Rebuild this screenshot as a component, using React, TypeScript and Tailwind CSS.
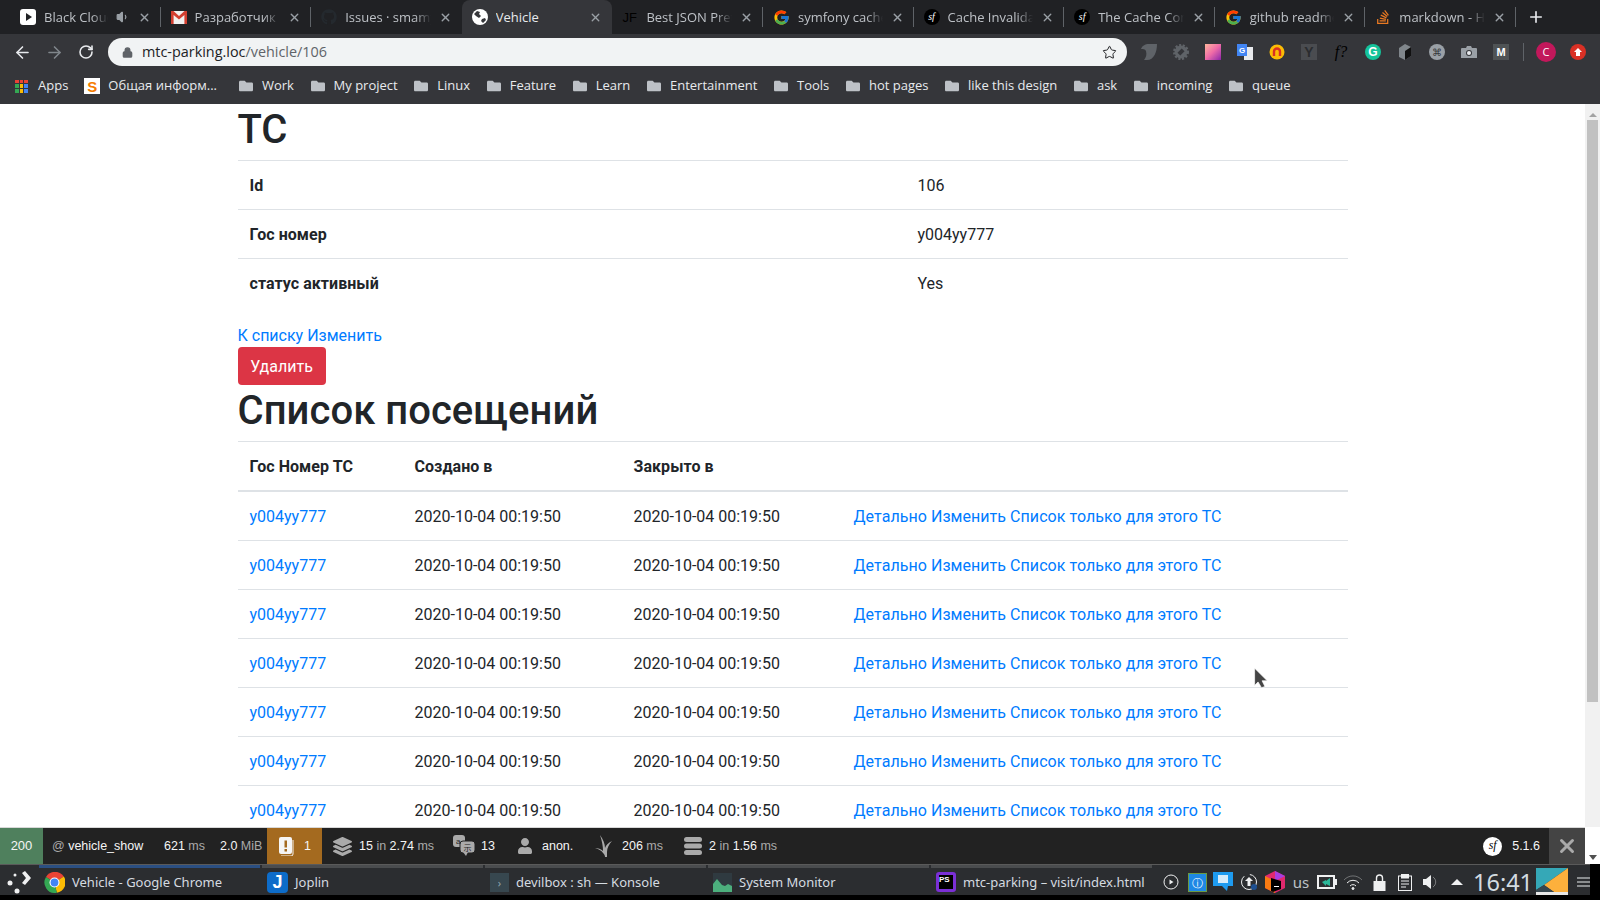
import { ArrowLeft, ArrowRight, Lock, Plus, RotateCw, Star, X, Volume1 } from "lucide-react";
import { FcGoogle } from "react-icons/fc";
import { FaGithub, FaLayerGroup, FaUser, FaStackOverflow, FaFolder } from "react-icons/fa";
import type { ReactNode } from "react";

const chromeFont = "font-['Open_Sans',sans-serif]";
const linkClass = "text-[#007bff]";

function SfBadge({ size = 16, dark = true }: { size?: number; dark?: boolean }) {
  return (
    <span
      style={{ width: size, height: size, fontSize: size * 0.62 }}
      className={`flex shrink-0 items-center justify-center rounded-full font-['Liberation_Serif',serif] italic leading-none ${dark ? "bg-black text-white" : "bg-white text-black"}`}
    >
      sf
    </span>
  );
}

function BlackCloudIcon() {
  return (
    <svg width="16" height="16" viewBox="0 0 16 16" className="shrink-0">
      <rect width="16" height="16" rx="3" fill="#fff" />
      <path d="M6 4l6 4-6 4z" fill="#202124" />
    </svg>
  );
}

function GmailIcon() {
  return (
    <svg width="16" height="13" viewBox="0 0 16 13" className="shrink-0">
      <rect width="16" height="13" fill="#f1f1f1" />
      <path d="M0 0h2.5L8 5 13.5 0H16v13h-2.6V4L8 8.6 2.6 4v9H0z" fill="#d23f31" />
    </svg>
  );
}

function GlobeIcon() {
  return (
    <svg width="16" height="16" viewBox="0 0 16 16" className="shrink-0">
      <circle cx="8" cy="8" r="8" fill="#fff" />
      <path d="M2 5l3-3 3 1-1 2 2 2-2 2-3-2zM10 10l3-1 1 2-3 3-2-2z" fill="#35363a" />
    </svg>
  );
}

const tabs: { title: string; icon: ReactNode; audio?: boolean; active?: boolean }[] = [
  { title: "Black Cloud", icon: <BlackCloudIcon />, audio: true },
  { title: "Разработчик Разработчик", icon: <GmailIcon /> },
  { title: "Issues · smamy/repo", icon: <FaGithub className="shrink-0 text-[#24292e]" size={16} /> },
  { title: "Vehicle", icon: <GlobeIcon />, active: true },
  {
    title: "Best JSON Pretty",
    icon: <span className="w-4 shrink-0 font-['Liberation_Sans',sans-serif] text-[13px] leading-none text-black">JF</span>,
  },
  { title: "symfony cache", icon: <FcGoogle className="shrink-0" size={17} /> },
  { title: "Cache Invalidation", icon: <SfBadge /> },
  { title: "The Cache Component", icon: <SfBadge /> },
  { title: "github readme", icon: <FcGoogle className="shrink-0" size={17} /> },
  { title: "markdown - How", icon: <FaStackOverflow className="shrink-0 text-[#e87922]" size={16} /> },
];

function Tab({ title, icon, audio, active }: { title: string; icon: ReactNode; audio?: boolean; active?: boolean }) {
  return (
    <div
      className={`flex h-[34px] w-[150.6px] shrink-0 items-center gap-2 px-[10px] ${active ? "rounded-t-lg bg-[#35363a] text-[#e8eaed]" : "text-[#bdc1c6]"}`}
    >
      {icon}
      <span
        className={`min-w-0 flex-1 overflow-hidden whitespace-nowrap pt-[2px] text-[13px] ${active ? "" : "[mask-image:linear-gradient(to_left,transparent,black_16px)]"}`}
      >
        {title}
      </span>
      {audio && <Volume1 size={14} className="shrink-0 text-[#9aa0a6]" fill="#9aa0a6" />}
      <X size={13} strokeWidth={2.5} className="shrink-0 text-[#9aa0a6]" />
    </div>
  );
}

function TabSep({ hidden }: { hidden?: boolean }) {
  return <span className={`-ml-px h-[20px] w-px shrink-0 ${hidden ? "bg-transparent" : "bg-[#5f6368]"}`} />;
}

function TabStrip() {
  return (
    <div className="flex h-[34px] items-center bg-[#202124] pl-[10px]">
      {tabs.map((t, i) => (
        <div key={i} className="flex items-center">
          <Tab {...t} />
          <TabSep hidden={t.active || tabs[i + 1]?.active} />
        </div>
      ))}
      <Plus size={18} strokeWidth={2.2} className="ml-[11px] text-[#e8eaed]" />
    </div>
  );
}

const ext: ReactNode[] = [
  <svg key="a" width="16" height="16" viewBox="0 0 16 16"><path d="M0 5c1-3 4-5 8-5h8c0 8-3 16-10 16H3c2-3 3-5 2-9-1-2-3-2-5-2z" fill="#5f6368" /></svg>,
  <svg key="b" width="16" height="16" viewBox="0 0 16 16"><circle cx="8" cy="8" r="6.5" fill="#5f6368" stroke="#5f6368" strokeWidth="3" strokeDasharray="2 1.5" /><rect x="6" y="5" width="4" height="6" fill="#35363a" transform="rotate(45 8 8)" /></svg>,
  <span key="c" className="h-4 w-4 bg-gradient-to-br from-[#ffb59a] via-[#ee6aa7] to-[#8e1fa8]" />,
  <svg key="d" width="16" height="16" viewBox="0 0 16 16"><rect x="7" y="3" width="9" height="13" fill="#e8eaed" /><rect width="10" height="12" fill="#4285f4" /><text x="2" y="9" fontSize="8" fontWeight="700" fill="#fff" fontFamily="Liberation Sans">G</text></svg>,
  <svg key="e" width="16" height="16" viewBox="0 0 16 16"><circle cx="8" cy="8" r="7.5" fill="#fbbc05" /><path d="M5 12V7.5a3 3 0 016 0V12" stroke="#d93025" strokeWidth="2.4" fill="none" /></svg>,
  <span key="f" className="flex h-4 w-4 items-center justify-center bg-[#4a4c50] font-['Liberation_Sans',sans-serif] text-[14px] font-bold leading-none text-[#2b2c2f]">Y</span>,
  <span key="g" className="font-['Liberation_Serif',serif] text-[16px] italic leading-none text-black">f?</span>,
  <span key="h" className="flex h-4 w-4 items-center justify-center rounded-full bg-[#15c39a] font-['Liberation_Sans',sans-serif] text-[12px] font-bold leading-none text-white">G</span>,
  <svg key="i" width="16" height="16" viewBox="0 0 16 16"><path d="M2 4l6-4 6 3v9l-6 4-6-3z" fill="#80868b" /><path d="M8 7l6-4v9l-6 4z" fill="#111" /></svg>,
  <span key="j" className="flex h-4 w-4 items-center justify-center rounded-full bg-[#9aa0a6] text-[10px] leading-none text-[#35363a]">⌘</span>,
  <svg key="k" width="16" height="14" viewBox="0 0 16 14"><path d="M1 3h4l1-2h4l1 2h4a1 1 0 011 1v9H0V4a1 1 0 011-1z" fill="#9aa0a6" /><circle cx="8" cy="8" r="3" fill="#35363a" /><circle cx="8" cy="8" r="2" fill="#e8eaed" /></svg>,
  <span key="l" className="flex h-4 w-4 items-center justify-center bg-[#4f5355] font-['Liberation_Sans',sans-serif] text-[11px] font-black leading-none text-white">M</span>,
];

function Toolbar() {
  return (
    <div className="flex h-[36px] items-center bg-[#35363a]">
      <div className="flex w-[108px] shrink-0 items-center pl-[6px] text-[#e8eaed]">
        <span className="flex w-8 justify-center"><ArrowLeft size={19} strokeWidth={2} /></span>
        <span className="flex w-8 justify-center"><ArrowRight size={19} strokeWidth={2} className="text-[#80868b]" /></span>
        <span className="flex w-8 justify-center"><RotateCw size={16} strokeWidth={2.4} /></span>
      </div>
      <div className="flex h-[28px] w-[1019px] shrink-0 items-center rounded-full bg-[#f1f3f4] pl-[14px] pr-[10px]">
        <Lock size={11} strokeWidth={3} className="text-[#5f6368]" fill="#5f6368" />
        <span className="ml-[9px] flex-1 pb-px text-[14.4px] text-[#202124]">
          mtc-parking.loc<span className="text-[#5f6368]">/vehicle/106</span>
        </span>
        <Star size={15} strokeWidth={1.6} className="text-[#202124]" />
      </div>
      <div className="ml-[6px] flex items-center">
        {ext.map((e, i) => (
          <span key={i} className="flex h-7 w-8 items-center justify-center">{e}</span>
        ))}
        <span className="mx-[6px] h-[18px] w-px bg-[#5f6368]" />
        <span className="ml-[6px] flex h-[20px] w-[20px] items-center justify-center rounded-full bg-[#c2185b] text-[11px] text-white">C</span>
        <span className="ml-[14px] flex h-4 w-4 items-center justify-center rounded-full bg-[#d93025]">
          <svg width="10" height="10" viewBox="0 0 10 10"><path d="M5 1l4 4H7v4H3V5H1z" fill="#fff" /></svg>
        </span>
      </div>
    </div>
  );
}

const bookmarks = ["Work", "My project", "Linux", "Feature", "Learn", "Entertainment", "Tools", "hot pages", "like this design", "ask", "incoming", "queue"];

function BookmarksBar() {
  return (
    <div className="flex h-[34px] items-start bg-[#35363a] pt-[6px] text-[13px] text-[#e8eaed]">
      <div className="ml-[15px] flex h-[20px] items-center">
        <span className="grid h-[13px] w-[13px] grid-cols-3 gap-px">
          {["#ea4335", "#ea4335", "#ea4335", "#34a853", "#fbbc05", "#4285f4", "#34a853", "#fbbc05", "#4285f4"].map((c, i) => (
            <span key={i} style={{ background: c }} />
          ))}
        </span>
        <span className="ml-[10px]">Apps</span>
        <span className="ml-[16px] flex h-4 w-4 items-center justify-center bg-white font-['Liberation_Sans',sans-serif] text-[15px] font-bold leading-none text-[#f57c00]">S</span>
        <span className="ml-[8px]">Общая информ...</span>
      </div>
      <div className="ml-[22px] flex h-[20px] items-center gap-[16.6px]">
        {bookmarks.map((b) => (
          <span key={b} className="flex items-center gap-[9px]">
            <FaFolder size={14} className="text-[#bdc1c6]" />
            {b}
          </span>
        ))}
      </div>
    </div>
  );
}

function DetailRow({ label, value }: { label: string; value: string }) {
  return (
    <tr className="border-t border-[#dee2e6]">
      <th className="w-[668px] px-3 pb-[11px] pt-[13px] text-left font-bold tracking-[0.05px]">{label}</th>
      <td className="px-3 pb-[11px] pt-[13px]">{value}</td>
    </tr>
  );
}

function VisitRow() {
  return (
    <tr className="border-t border-[#dee2e6]">
      <td className="px-3 pb-[11px] pt-[13px]"><a className={linkClass}>у004уу777</a></td>
      <td className="px-3 pb-[11px] pt-[13px]">2020-10-04 00:19:50</td>
      <td className="px-3 pb-[11px] pt-[13px]">2020-10-04 00:19:50</td>
      <td className={`px-3 pb-[11px] pt-[13px] tracking-[0.05px] ${linkClass}`}>
        <a>Детально</a> <a>Изменить</a> <a>Список только для этого ТС</a>
      </td>
    </tr>
  );
}

function Page() {
  return (
    <div className="relative min-h-0 flex-1 overflow-hidden bg-white font-['Roboto',sans-serif] text-[16px] leading-6 text-[#212529]">
      <div className="ml-[237.5px] w-[1110px]">
        <h1 className="mb-2 h-12 pt-[2px] text-[40px] font-medium leading-[48px]">ТС</h1>
        <table className="mb-4 w-full table-fixed">
          <tbody>
            <DetailRow label="Id" value="106" />
            <DetailRow label="Гос номер" value="у004уу777" />
            <DetailRow label="статус активный" value="Yes" />
          </tbody>
        </table>
        <div className={`h-6 pt-px ${linkClass}`}>
          <a>К списку</a> <a>Изменить</a>
        </div>
        <button className="block h-[38px] w-[88px] rounded bg-[#dc3545] pt-px text-white">Удалить</button>
        <h1 className="mb-2 h-12 pt-[2px] text-[40px] font-medium leading-[48px] tracking-[0.05px]">Список посещений</h1>
        <table className="w-full table-fixed">
          <thead>
            <tr className="border-t border-b-2 border-[#dee2e6] text-left tracking-[0.05px]">
              <th className="w-[165px] px-3 pb-[11px] pt-[13px] font-bold">Гос Номер ТС</th>
              <th className="w-[219px] px-3 pb-[11px] pt-[13px] font-bold">Создано в</th>
              <th className="w-[220px] px-3 pb-[11px] pt-[13px] font-bold">Закрыто в</th>
              <th className="p-3" />
            </tr>
          </thead>
          <tbody>
            {[0, 1, 2, 3, 4, 5, 6, 7].map((i) => (
              <VisitRow key={i} />
            ))}
          </tbody>
        </table>
      </div>
      <svg width="17" height="23" viewBox="0 0 14 20" className="absolute left-[1253px] top-[563px]">
        <path d="M1 1v15l3-3 3 5 3-1-2.500-5H12z" fill="#454545" stroke="#fff" strokeWidth="0.6" />
      </svg>
    </div>
  );
}

function Muted({ children }: { children: ReactNode }) {
  return <span className="text-[#aaa]">{children}</span>;
}

function TranslationIcon() {
  return (
    <svg width="22" height="22" viewBox="0 0 22 22" fill="#aaa" className="shrink-0">
      <rect x="0" y="0" width="12" height="12" rx="3" />
      <rect x="7" y="6" width="15" height="12" rx="3" stroke="#222" />
      <path d="M10 17h5l-2 4z" />
      <text x="3" y="9" fontSize="8" fill="#222" fontFamily="Liberation Sans">a</text>
      <text x="10.500" y="16" fontSize="8" fill="#222" fontFamily="Noto Sans CJK JP">示</text>
    </svg>
  );
}

function TwigIcon() {
  return (
    <svg width="20" height="23" viewBox="0 0 20 23" fill="#aaa" className="shrink-0">
      <path d="M10 22c0-2-1-3-2-4C7 16 4 14 0 13c3 0 6 1 8 3 0-5-1-10-3-16 3 4 5 9 5 13 1-3 3-5 7-7-3 3-5 7-5 11v5z" />
    </svg>
  );
}

function DbIcon() {
  return (
    <svg width="18" height="18" viewBox="0 0 18 18" fill="#aaa" className="shrink-0">
      <rect width="18" height="5" rx="2.500" />
      <rect y="6.500" width="18" height="5" rx="2.500" />
      <rect y="13" width="18" height="5" rx="2.500" />
    </svg>
  );
}

function DebugBar() {
  return (
    <div className="flex h-[37px] shrink-0 items-stretch border-t border-[#d8d8d8] bg-[#222] font-['Liberation_Sans',sans-serif] text-[12.5px] text-[#f5f5f5]">
      <div className="flex w-[43px] items-center justify-center bg-[#4f805d] text-[13px]">200</div>
      <div className="ml-[9px] flex w-[112px] items-center"><Muted>@&nbsp;</Muted>vehicle_show</div>
      <div className="flex w-[56px] items-center">621&nbsp;<Muted>ms</Muted></div>
      <div className="flex w-[47px] items-center">2.0&nbsp;<Muted>MiB</Muted></div>
      <div className="flex w-[55px] items-center bg-[#a46a1f] pl-[12px]">
        <svg width="15" height="19" viewBox="0 0 15 19" className="shrink-0">
          <rect x="0" y="0" width="13" height="17" rx="2" fill="#f5f5f5" />
          <path d="M14 3v14a2 2 0 01-2 2H2" stroke="#f5f5f5" fill="none" />
          <rect x="5.500" y="3.500" width="2.500" height="7" fill="#a46a1f" />
          <rect x="5.500" y="12" width="2.500" height="2.500" fill="#a46a1f" />
        </svg>
        <span className="ml-[10px]">1</span>
      </div>
      <div className="ml-[11px] flex w-[120px] items-center gap-[7px]">
        <FaLayerGroup size={19} className="shrink-0 text-[#aaa]" />
        <span>15 <Muted>in</Muted> 2.74 <Muted>ms</Muted></span>
      </div>
      <div className="flex w-[64px] items-center gap-[6px]">
        <TranslationIcon />
        <span>13</span>
      </div>
      <div className="flex w-[80px] items-center gap-[9px]">
        <FaUser size={16} className="shrink-0 text-[#aaa]" />
        <span>anon.</span>
      </div>
      <div className="-ml-[2px] flex w-[89px] items-center gap-[7px]">
        <TwigIcon />
        <span>206 <Muted>ms</Muted></span>
      </div>
      <div className="flex items-center gap-[7px]">
        <DbIcon />
        <span>2 <Muted>in</Muted> 1.56 <Muted>ms</Muted></span>
      </div>
      <div className="ml-auto flex items-center gap-[10px] pr-[9px]">
        <SfBadge size={19} dark={false} />
        <span>5.1.6</span>
      </div>
      <div className="flex w-[36px] items-center justify-center bg-[#444]">
        <X size={22} strokeWidth={3.2} className="text-[#aaa]" />
      </div>
    </div>
  );
}

function Scrollbar() {
  return (
    <div className="flex h-full w-[15px] shrink-0 flex-col">
      <div className="flex h-[723px] flex-col items-center bg-[#f1f1f1]">
        <span className="mt-[9px] h-0 w-0 border-x-[4px] border-b-[4px] border-x-transparent border-b-[#a3a3a3]" />
        <span className="mt-[3px] h-[582px] w-[11px] bg-[#c1c1c1]" />
      </div>
      <div className="flex flex-1 justify-center bg-white pt-[28px]">
        <span className="h-0 w-0 border-x-[4px] border-t-[5px] border-x-transparent border-t-[#505050]" />
      </div>
    </div>
  );
}

const tasks: { label: string; active?: boolean; icon: ReactNode }[] = [
  {
    label: "Vehicle - Google Chrome",
    active: true,
    icon: (
      <svg width="21" height="21" viewBox="0 0 21 21" className="shrink-0">
        <path d="M10.500 10.500L2 5a10.500 10.500 0 0117.800-.500z" fill="#ea4335" />
        <path d="M10.500 10.500L19.800 4.500a10.500 10.500 0 01-7 16.300z" fill="#fbbc05" />
        <path d="M10.500 10.500l2.300 10.300A10.500 10.500 0 012 5z" fill="#34a853" />
        <circle cx="10.500" cy="10.500" r="5" fill="#fff" />
        <circle cx="10.500" cy="10.500" r="3.900" fill="#4285f4" />
      </svg>
    ),
  },
  {
    label: "Joplin",
    icon: <span className="flex h-[21px] w-[21px] shrink-0 items-center justify-center rounded-sm bg-[#0d6cc9] font-['Liberation_Sans',sans-serif] text-[18px] font-bold leading-none text-white">J</span>,
  },
  {
    label: "devilbox : sh — Konsole",
    icon: <span className="flex h-[19px] w-[19px] shrink-0 items-center justify-center bg-[#37474f] text-[11px] leading-none text-[#90a4ae]">›</span>,
  },
  {
    label: "System Monitor",
    icon: (
      <svg width="19" height="19" viewBox="0 0 19 19" className="shrink-0">
        <rect width="19" height="19" fill="#2f3a40" />
        <path d="M0 11l4-5 5 6 3 1 3-2 4 2v6H0z" fill="#4caf7d" />
      </svg>
    ),
  },
  {
    label: "mtc-parking – visit/index.html",
    icon: (
      <span className="flex h-[20px] w-[20px] shrink-0 items-start justify-center rounded-[3px] bg-[#7b2fd6] p-[3px]">
        <span className="h-full w-full bg-black font-['Liberation_Sans',sans-serif] text-[8px] font-bold leading-[10px] text-white">PS</span>
      </span>
    ),
  },
];

const trayIcons: ReactNode[] = [
  <svg key="play" width="16" height="16" viewBox="0 0 16 16">
    <circle cx="8" cy="8" r="7" fill="none" stroke="#eff0f1" />
    <path d="M6.500 5.500l4 2.500-4 2.500z" fill="#eff0f1" />
  </svg>,
  <span key="info" className="flex h-[19px] w-[19px] items-center justify-center border border-[#6b9a44] bg-[#1e88e5] text-[11px] leading-none text-white">ⓘ</span>,
  <svg key="chat" width="20" height="20" viewBox="0 0 20 20">
    <path d="M0 0h20v14h-5l-1 5-5-5H0z" fill="#1e9bf0" />
    <rect x="5" y="3" width="10" height="8" fill="#d6ecfb" />
  </svg>,
  <svg key="update" width="18" height="18" viewBox="0 0 18 18">
    <circle cx="9" cy="9" r="7.500" fill="none" stroke="#eff0f1" strokeDasharray="30 6" />
    <path d="M9 4l4 4h-2.500v5h-3V8H5z" fill="#eff0f1" />
    <circle cx="14" cy="14" r="3" fill="#1d4f91" />
  </svg>,
  <svg key="toolbox" width="20" height="22" viewBox="0 0 20 22">
    <path d="M10 0l10 5v12l-10 5-10-5V5z" fill="#e0296e" />
    <path d="M0 5l10 5v12l-10-5z" fill="#f97a12" />
    <path d="M10 0l10 5-10 5z" fill="#a83de0" />
    <path d="M6 7l10 3v8l-8 3-2-1z" fill="#000" />
    <rect x="9" y="15" width="5" height="1" fill="#fff" />
  </svg>,
  <span key="us" className="text-[15px] leading-none text-[#bdc3c7]">us</span>,
  <svg key="battery" width="20" height="14" viewBox="0 0 20 14">
    <rect x="0.500" y="0.500" width="17" height="13" fill="#eff0f1" stroke="#eff0f1" />
    <rect x="2" y="2" width="14" height="10" fill="#2d2f32" />
    <path d="M13 3v8l-4-2v2L5 7l4-2v1z" fill="#2bb89a" />
    <rect x="18" y="4" width="2" height="6" fill="#eff0f1" />
  </svg>,
  <svg key="wifi" width="20" height="16" viewBox="0 0 20 16" fill="none" stroke="#eff0f1">
    <path d="M1 6a12 12 0 0118 0" strokeOpacity="0.35" />
    <path d="M4 9a8 8 0 0112 0" />
    <path d="M7 12a4 4 0 016 0" />
    <circle cx="10" cy="14.500" r="1" fill="#eff0f1" />
  </svg>,
  <svg key="lock" width="13" height="18" viewBox="0 0 13 18">
    <path d="M3.500 8V5a3 3 0 016 0v3" fill="none" stroke="#eff0f1" strokeWidth="1.400" />
    <rect x="0.500" y="8" width="12" height="10" fill="#eff0f1" />
  </svg>,
  <svg key="clip" width="14" height="17" viewBox="0 0 14 17" fill="none" stroke="#eff0f1">
    <rect x="0.500" y="2" width="13" height="14.500" />
    <rect x="3.500" y="0" width="7" height="4" fill="#eff0f1" />
    <path d="M3 7h8M3 10h8M3 13h5" />
  </svg>,
  <svg key="speaker" width="16" height="16" viewBox="0 0 16 16">
    <path d="M0 5h3l5-4v14l-5-4H0z" fill="#eff0f1" />
    <path d="M10 3a6 6 0 010 10" fill="none" stroke="#eff0f1" strokeOpacity="0.4" />
  </svg>,
  <span key="up" className="h-0 w-0 border-x-[6px] border-b-[6px] border-x-transparent border-b-[#eff0f1]" />,
];

function Tray() {
  return (
    <div className="ml-[4px] flex h-[30px] flex-1 items-center pt-[4px] text-[#eff0f1]">
      {trayIcons.map((icon, i) => (
        <span key={i} className="flex h-[26px] w-[26px] shrink-0 items-center justify-center">{icon}</span>
      ))}
      <span className="ml-[3px] w-[63px] shrink-0 pt-px font-['Noto_Sans',sans-serif] text-[23.5px] leading-none text-[#d3dbe0]">16:41</span>
      <svg width="32" height="27" viewBox="0 0 32 27" className="shrink-0 self-end">
        <path d="M0 0h32L8 17 0 22z" fill="#35a8b7" />
        <path d="M32 0v24H18L8 17z" fill="#fdb03c" />
        <path d="M0 22l8-5 10 7H0z" fill="#37474f" />
        <rect y="24" width="32" height="3" fill="#e8e8e8" />
      </svg>
      <span className="ml-[9px] flex w-[13px] shrink-0 flex-col gap-[2px]">
        <span className="h-[2px] bg-[#8a8d8f]" />
        <span className="h-[2px] bg-[#8a8d8f]" />
        <span className="h-[2px] bg-[#8a8d8f]" />
      </span>
    </div>
  );
}

function Taskbar() {
  return (
    <div className="flex h-[36px] shrink-0 flex-col bg-black">
      <div className="flex h-[31px] w-[1590px] border-t border-[#5a5a5a] bg-[#2b2d30] pl-[7px] font-['Noto_Sans',sans-serif] text-[13px] text-[#d5dbe0]">
        <svg width="26" height="30" viewBox="0 0 26 30" className="shrink-0">
          <circle cx="3" cy="18" r="2.500" fill="#eff0f1" />
          <circle cx="8" cy="10" r="1.500" fill="#eff0f1" />
          <circle cx="10" cy="26" r="2.500" fill="#eff0f1" />
          <path d="M15 8l3-2 6 7-6 7-3-2 4-5z" fill="#eff0f1" />
        </svg>
        <div className="ml-[6px] flex">
          {tasks.map((t) => (
            <div key={t.label} className="w-[223px] shrink-0 pr-[2px]">
              <div className={`h-[3px] ${t.active ? "bg-[#2b4f82]" : "bg-[#4a4c4e]"}`} />
              <div className="flex h-[27px] items-center gap-[7px] pl-[5px] pt-px">
                {t.icon}
                <span className="whitespace-nowrap pt-px">{t.label}</span>
              </div>
            </div>
          ))}
        </div>
        <Tray />
      </div>
    </div>
  );
}

export default function App() {
  return (
    <div className={`flex h-[900px] w-[1600px] flex-col overflow-hidden ${chromeFont}`}>
      <TabStrip />
      <Toolbar />
      <BookmarksBar />
      <div className="flex min-h-0 flex-1">
        <div className="flex min-w-0 flex-1 flex-col">
          <Page />
          <DebugBar />
        </div>
        <Scrollbar />
      </div>
      <Taskbar />
    </div>
  );
}
